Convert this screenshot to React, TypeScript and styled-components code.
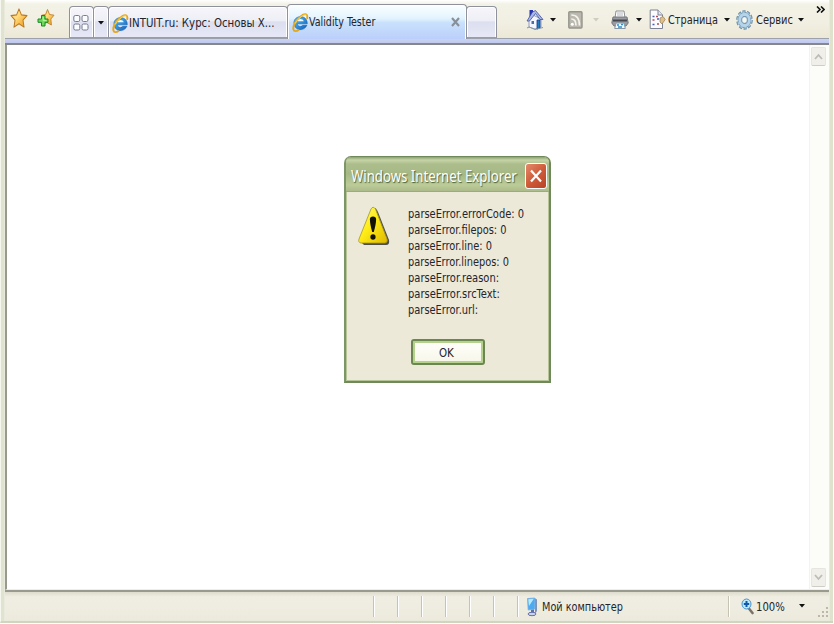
import React from "react";
import styled, { createGlobalStyle, css } from "styled-components";

const Global = createGlobalStyle`
  * { box-sizing: border-box; }
  html, body { margin: 0; padding: 0; background: #fff; overflow: hidden; }
  svg { display: block; flex: none; }
`;

const Window = styled.div`
  width: 834px;
  height: 624px;
  display: flex;
  flex-direction: column;
  position: relative;
  overflow: hidden;
  color: #24242c;
  font: 13px/16px "DejaVu Sans Condensed", "DejaVu Sans", sans-serif;
  background: #fff;
`;

const Frame = styled.div`
  width: 833px;
  height: 623px;
  display: flex;
  flex-direction: column;
  padding: 0 4px 1px 4px;
  background: #e8eadb;
  border-left: 1px solid #f6f7ee;
  border-bottom: 2px solid #d0d5bf;
  box-shadow: inset 3px 0 #dfe3cf, inset -3px 0 #dfe2cd;
`;

const Text = styled.span<{ $w: number; $s: number }>`
  display: inline-block;
  flex: none;
  width: ${(p) => p.$w}px;
  white-space: pre;
  transform: scaleX(${(p) => p.$s});
  transform-origin: 0 50%;
`;

const Toolbar = styled.header`
  height: 38px;
  flex: none;
  display: flex;
  align-items: flex-start;
  background: linear-gradient(#fff 0, #f3f2e6 4px, #f1efe2 24px, #ebe8d6 38px);
`;

const Favorites = styled.div`
  width: 64px;
  display: flex;
  gap: 9px;
  padding: 8px 0 0 5px;
`;

const tabFace = css`
  border: 1px solid #8f929c;
  border-bottom-color: #9a9da8;
  background: linear-gradient(#f6f6fa 0, #eeeef6 45%, #dcdff0 50%, #e6e8f6 100%);
  box-shadow: inset 1px 1px #fff, inset -1px 0 #fff;
`;

const Tab = styled.div<{ $w: number; $pad?: number }>`
  ${tabFace}
  width: ${(p) => p.$w}px;
  height: 32px;
  margin-top: 6px;
  margin-right: -1px;
  padding: 2px 0 0 ${(p) => p.$pad ?? 0}px;
  border-radius: 4px 4px 0 0;
  display: flex;
  align-items: center;
  flex: none;
`;

const ActiveTab = styled(Tab)`
  height: 35px;
  margin-top: 4px;
  margin-bottom: -1px;
  border-bottom: 0;
  padding-top: 0;
  position: relative;
  background: linear-gradient(#fbffff 0, #e2f3fe 40%, #c9e1fc 52%, #bccffb 100%);
`;

const TabClose = styled.span`
  margin-left: auto;
  padding-right: 6px;
`;

const Commands = styled.nav`
  display: flex;
  flex: 1;
  height: 38px;
  padding: 1px 0 0 30px;
  align-items: center;
`;

const Slot = styled.span<{ $w: number }>`
  width: ${(p) => p.$w}px;
  flex: none;
  display: flex;
  align-items: center;
`;

const More = styled.span`
  align-self: flex-start;
  padding-top: 5px;
`;

const TabStrip = styled.div`
  height: 7px;
  flex: none;
  border-top: 1px solid #9da1ac;
  border-bottom: 2px solid #85878a;
  background: linear-gradient(#cbd3f2, #bfc9ee);
`;

const Viewport = styled.main`
  flex: 1;
  display: flex;
  justify-content: flex-end;
  background: #fff;
  border-left: 2px solid #98998f;
  border-bottom: 1px solid #eee;
`;

const ScrollTrack = styled.div`
  width: 20px;
  padding: 2px 1px;
  display: flex;
  flex-direction: column;
  justify-content: space-between;
  background: #fcfcf9;
  border-left: 1px solid #f4f4ee;
`;

const ScrollButton = styled.div`
  width: 15px;
  height: 19px;
  display: grid;
  place-items: center;
  background: #f0efea;
  border: 1px solid #e6e5df;
  border-bottom-color: #cfcec6;
  border-radius: 2px;
`;

const StatusBar = styled.footer`
  height: 30px;
  flex: none;
  display: flex;
  border-top: 2px solid #9a9a8e;
  background: linear-gradient(#dedccd 0, #f0eee3 5px, #edeadd 100%);
`;

const StatusText = styled.div`
  width: 368px;
  flex: none;
`;

const Pane = styled.div<{ $w: number }>`
  width: ${(p) => p.$w}px;
  height: 21px;
  margin-top: 4px;
  flex: none;
  border-left: 1px solid #c6c3b3;
  box-shadow: inset 1px 0 #fff;
  display: flex;
  align-items: center;
`;

const ZonePane = styled(Pane)`
  padding-left: 8px;
`;

const ZoomArrow = styled.span`
  align-self: center;
`;

const Grip = styled.span`
  margin-left: auto;
  align-self: flex-end;
`;

const Dialog = styled.section`
  position: absolute;
  left: 344px;
  top: 156px;
  width: 207px;
  height: 227px;
  display: flex;
  flex-direction: column;
  border: 2px solid #70895a;
  border-top-width: 1px;
  border-left-color: #7d9668;
  border-radius: 7px 7px 0 0;
  background: #ece9d8;
  box-shadow: inset 1px 0 #b6c597, inset -1px -1px #b6c597;
`;

const TitleBar = styled.div`
  height: 35px;
  flex: none;
  display: flex;
  align-items: center;
  padding: 3px 2px 0 5px;
  border-radius: 5px 5px 0 0;
  border-bottom: 1px solid #9aab80;
  background: linear-gradient(#8ca173 0, #c6d4a6 3px, #adbe8d 7px, #a5b984 17px, #bccb98 28px, #abbb89 34px);
`;

const Title = styled(Text)`
  color: #fff;
  text-shadow: 1px 1px 1px #4f6138;
  font: 16px/20px "Noto Sans", sans-serif;
`;

const CloseButton = styled.button`
  width: 22px;
  height: 26px;
  margin-left: auto;
  padding: 0;
  display: grid;
  place-items: center;
  border: 1px solid #fff;
  border-radius: 3px;
  background: linear-gradient(135deg, #e38b6c, #cf5b3a 50%, #b94325);
`;

const DialogBody = styled.div`
  height: 147px;
  display: flex;
  padding: 14px 0 0 12px;
`;

const Messages = styled.div`
  display: flex;
  flex-direction: column;
  padding-left: 18px;
`;

const OkButton = styled.button`
  width: 74px;
  height: 26px;
  margin-left: 65px;
  padding: 1px 0 0 26px;
  display: flex;
  align-items: center;
  color: inherit;
  font: inherit;
  border: 2px solid #6b8650;
  border-radius: 3px;
  background: linear-gradient(#fffffb, #f7f6e9);
  box-shadow: inset 0 0 0 2px #b5d18d;
`;

const Arrow = ({ color = "#111" }: { color?: string }) => (
  <svg width="6" height="4" viewBox="0 0 6 4"><path d="M0 0H6L3 3.6Z" fill={color} /></svg>
);

const starPath = "M9 .8 11.4 6.2 17 6.9 13 11 14 17.2 9 14.1 4 17.2 5 11 1 6.9 6.6 6.2Z";

const HiddenDefs = styled.svg`
  position: absolute;
  width: 0;
  height: 0;
`;

const Defs = () => (
  <HiddenDefs>
    <defs>
      <linearGradient id="gold" x1="0" y1="0" x2="1" y2="1">
        <stop offset="0" stopColor="#ffc65a" /><stop offset=".4" stopColor="#ffdc80" /><stop offset="1" stopColor="#f1930a" />
      </linearGradient>
      <linearGradient id="blue" x1="0" y1="0" x2="1" y2="1">
        <stop offset="0" stopColor="#58c5fa" /><stop offset="1" stopColor="#105cb6" />
      </linearGradient>
      <linearGradient id="warning" x1="0" y1="0" x2="1" y2="1">
        <stop offset="0" stopColor="#fff97a" /><stop offset=".45" stopColor="#ffed16" /><stop offset="1" stopColor="#e0b800" />
      </linearGradient>
    </defs>
  </HiddenDefs>
);

const Star = () => (
  <svg width="18" height="20" viewBox="0 0 18 18" preserveAspectRatio="none">
    <path d={starPath} fill="url(#gold)" stroke="#b87824" strokeWidth="1" strokeLinejoin="round" />
  </svg>
);

const AddStar = () => (
  <svg width="18" height="20" viewBox="0 0 18 20">
    <path d="M10.5 1.5 12.5 6.5 17 7.2 13.8 11 14.4 17 10 14.5 6 16 6.4 10 4.8 7.2 8.6 6.5Z" fill="url(#gold)" stroke="#c58a35" strokeLinejoin="round" />
    <path d="M4.5 7.5H8V11H11V14.3H8V18H4.5V14.3H1V11H4.5Z" fill="#6ed95a" stroke="#168a22" strokeLinejoin="round" />
    <path d="M6.2 9V12.6H9.5" fill="none" stroke="#c0f5a8" />
  </svg>
);

const IELogo = () => (
  <svg width="17" height="21" viewBox="0 0 16 21" preserveAspectRatio="none">
    <path d="M14.4 11.8H5C5.2 14.6 8.7 15.4 10 13.3H14.1C11 20.2 1.8 18.6 1.8 10.8 1.8 2.8 14.6 2 14.4 11.8Z" fill="url(#blue)" stroke="#0e5caf" strokeWidth=".5" />
    <path d="M5.1 9.2H11C10.4 6.2 5.6 6.1 5.1 9.2Z" fill="#effaff" />
    <path d="M14.2 7C15.3 1.8 12.5.5 8.3 4.2 3.5 8.2.7 14 1.3 17.3 1.8 20 4.3 19.5 6.5 17.8" fill="none" stroke="#e5a719" strokeWidth="1.8" />
    <path d="M13.5 3.1C11.5 1.7 6 5.8 3 11.5" fill="none" stroke="#ffe16b" strokeWidth=".8" />
  </svg>
);

const QuickTabs = () => (
  <svg width="16" height="18" viewBox="0 0 16 18" fill="#fbfcff" stroke="#777b8a">
    <rect x=".8" y="1.5" width="6" height="6" rx="1.5" /><rect x="9" y="1.5" width="6" height="6" rx="1.5" />
    <rect x=".8" y="10" width="6" height="6" rx="1.5" /><rect x="9" y="10" width="6" height="6" rx="1.5" />
  </svg>
);

const Home = () => (
  <svg width="18" height="22" viewBox="0 0 18 22">
    <path d="M3.5 1H7V8H3.5Z" fill="#2433b0" />
    <path d="M3 10 7 6 15 10V18L9 20 3 18Z" fill="#f4f6ff" stroke="#7b86ae" strokeWidth=".8" />
    <path d="M1 12 6.5 3 9.5 1.5 17 10.5 14 10.5 9.5 4.5 3.5 12Z" fill="#a9b8e8" stroke="#42519c" strokeWidth=".8" />
    <path d="M11 11H14V19L11 20Z" fill="#247cc0" stroke="#123b87" strokeWidth=".8" />
    <path d="M5.5 12H8V15H5.5Z" fill="#516aa7" />
    <path d="M1 19 3.2 18 9 20.5 17 18.5" stroke="#8199a5" fill="none" />
  </svg>
);

const Feed = () => (
  <svg width="15" height="18" viewBox="0 0 15 18">
    <rect x=".8" y=".8" width="13.2" height="16.2" rx="1" fill="#bab8af" stroke="#96958c" strokeWidth="1.4" />
    <path d="M3.3 4C8.5 4 11.5 8 11.5 14.5M3.3 8C6.5 8 8 10.7 8 14.5" fill="none" stroke="#f4f3eb" strokeWidth="1.7" />
    <circle cx="4.3" cy="13.2" r="1.5" fill="#fff" />
  </svg>
);

const Printer = () => (
  <svg width="18" height="20" viewBox="0 0 18 20">
    <path d="M5 1H13L14 8H4Z" fill="#fff" stroke="#8c8f94" />
    <path d="M6 3H12M6 5H12" stroke="#b3b6bd" />
    <path d="M2 7H16L17.2 13 15 16H3L.8 13Z" fill="#9a9ca1" stroke="#73777d" />
    <path d="M2 10.5H16" stroke="#44484e" strokeWidth="2" />
    <path d="M5 13H13L14.3 18.5H3.7Z" fill="#edf8ff" stroke="#8798a5" />
    <path d="M6 15H8M10 14.5H12M7 17H11" stroke="#318fce" strokeWidth="1.4" />
  </svg>
);

const Page = () => (
  <svg width="17" height="21" viewBox="0 0 17 21">
    <path d="M1.2 1H9L13.5 6V19.5H1.2Z" fill="#fcfcff" stroke="#7c8292" />
    <path d="M9 1V6H13.5" fill="#dfe5f1" stroke="#7c8292" />
    <path d="M3.5 7.5H5.5M8 10H10M3.5 15.5H5.5" stroke="#465cba" strokeWidth="1.5" />
    <path d="M7 7.5H9M3.5 11H5.5M8 15H10" stroke="#b24c54" strokeWidth="1.3" />
    <path d="M11 9 14 7.5 16.2 10.5 13 15 11 13Z" fill="#dfbf8a" stroke="#9e875b" strokeWidth=".8" />
  </svg>
);

const Gear = () => (
  <svg width="17" height="20" viewBox="0 0 20 20" preserveAspectRatio="none">
    <circle cx="10" cy="10" r="8.2" fill="none" stroke="#6a8eaa" strokeWidth="3.2" strokeDasharray="3.5 1.652" />
    <circle cx="10" cy="10" r="5.5" fill="none" stroke="#6a8eaa" strokeWidth="5" />
    <circle cx="10" cy="10" r="8" fill="none" stroke="#abc9dd" strokeWidth="1.4" strokeDasharray="2.5 2.527" />
    <circle cx="10" cy="10" r="5.6" fill="none" stroke="#b4d4ea" strokeWidth="3.3" />
    <circle cx="10" cy="10" r="3.3" fill="#f4f6f2" stroke="#6a8eaa" strokeWidth=".7" />
  </svg>
);

const Warning = () => (
  <svg width="32" height="40" viewBox="0 0 32 40">
    <path d="M17 2Q18 2 20 6L31 34Q32 39 28 39H6L3 36Z" fill="#4e4d4b" />
    <path d="M13 3Q15-.5 17.5 3L29 33Q30 37 26.5 37H3Q-.2 36.5 1 33Z" fill="url(#warning)" stroke="#a79820" strokeWidth=".8" />
    <path d="M11.9 13Q12 10.5 15 10.5 18 10.5 18.1 13 18.1 18 15.8 26H14.2Q11.9 18 11.9 13Z" fill="#121306" />
    <ellipse cx="15" cy="31" rx="2.6" ry="2.7" fill="#121306" />
  </svg>
);

const Computer = () => (
  <svg width="13" height="20" viewBox="0 0 13 20">
    <path d="M8.5 1 11 2.5V14L9 17V12Z" fill="#7d92ba" />
    <path d="M1.5 1.5 8.8 1V12L2.2 13Z" fill="#4fa9ee" stroke="#6fb0e4" strokeWidth=".8" />
    <path d="M2.2 2.2 7.8 1.8 3 9Z" fill="#b9e8ff" />
    <path d="M5 13 8 12.5V16H5Z" fill="#5f6fa8" /><ellipse cx="6" cy="17" rx="4" ry="1.7" fill="#ccd2e8" stroke="#6672b0" />
  </svg>
);

const Magnifier = () => (
  <svg width="13" height="17" viewBox="0 0 13 17">
    <path d="M7.5 10 11.5 15" stroke="#7c7169" strokeWidth="2.6" strokeLinecap="round" />
    <ellipse cx="5.5" cy="6" rx="4.5" ry="5" fill="#bde9ff" stroke="#4c93ca" />
    <path d="M5.5 3V9M2.8 6H8.2" stroke="#1159a8" strokeWidth="2" />
  </svg>
);

const Chevron = ({ down = false }: { down?: boolean }) => (
  <svg width="9" height="7" viewBox="0 0 9 7"><path d={down ? "M1 1 4.5 5 8 1" : "M1 6 4.5 2 8 6"} fill="none" stroke="#bdbcb5" strokeWidth="1.8" /></svg>
);

const messages: [string, number, number][] = [
  ["parseError.errorCode: 0", 118, 0.848],
  ["parseError.filepos: 0", 100, 0.84],
  ["parseError.line: 0", 86, 0.84],
  ["parseError.linepos: 0", 102, 0.838],
  ["parseError.reason:", 94, 0.85],
  ["parseError.srcText:", 97, 0.85],
  ["parseError.url:", 73, 0.845],
];

export default function App() {
  return (
    <>
      <Global />
      <Window>
        <Defs />
        <Frame>
          <Toolbar>
            <Favorites><Star /><AddStar /></Favorites>
            <Tab $w={25} $pad={3}><QuickTabs /></Tab>
            <Tab $w={16} $pad={4}><Arrow /></Tab>
            <Tab $w={180} $pad={3}><IELogo /><Text $w={147} $s={0.873}>INTUIT.ru: Курс: Основы X...</Text></Tab>
            <ActiveTab $w={180} $pad={4}>
              <IELogo /><Text $w={69} $s={0.815}>Validity Tester</Text>
              <TabClose><svg width="9" height="10" viewBox="0 0 9 10"><path d="M1 1 8 9M8 1 1 9" stroke="#888f99" strokeWidth="2.1" /></svg></TabClose>
            </ActiveTab>
            <Tab $w={31} />
            <Commands>
              <Slot $w={24}><Home /></Slot><Slot $w={18}><Arrow /></Slot>
              <Slot $w={25}><Feed /></Slot><Slot $w={18}><Arrow color="#d0cdc0" /></Slot>
              <Slot $w={25}><Printer /></Slot><Slot $w={13}><Arrow /></Slot>
              <Slot $w={19}><Page /></Slot><Slot $w={56}><Text $w={51} $s={0.833}>Страница</Text></Slot><Slot $w={12}><Arrow /></Slot>
              <Slot $w={20}><Gear /></Slot><Slot $w={42}><Text $w={38} $s={0.846}>Сервис</Text></Slot><Slot $w={18}><Arrow /></Slot>
              <More><svg width="9" height="7" viewBox="0 0 9 7"><path d="M1 .5 4 3.5 1 6.5M5 .5 8 3.5 5 6.5" fill="none" stroke="#111" strokeWidth="1.6" /></svg></More>
            </Commands>
          </Toolbar>
          <TabStrip />
          <Viewport>
            <ScrollTrack>
              <ScrollButton><Chevron /></ScrollButton>
              <ScrollButton><Chevron down /></ScrollButton>
            </ScrollTrack>
          </Viewport>
          <StatusBar>
            <StatusText />
            {[0, 1, 2, 3, 4, 5].map((i) => <Pane key={i} $w={24} />)}
            <ZonePane $w={211}><Slot $w={16}><Computer /></Slot><Text $w={82} $s={0.83}>Мой компьютер</Text></ZonePane>
            <Pane $w={71}><Slot $w={12} /><Slot $w={15}><Magnifier /></Slot><Text $w={35} $s={0.86}>100%</Text></Pane>
            <ZoomArrow><Arrow /></ZoomArrow>
            <Grip><svg width="12" height="14" viewBox="0 0 12 14" fill="#bbb8a8"><path d="M9 1h2v2H9zM5 5h2v2H5zM9 5h2v2H9zM1 9h2v2H1zM5 9h2v2H5zM9 9h2v2H9z" /></svg></Grip>
          </StatusBar>
        </Frame>
        <Dialog>
          <TitleBar>
            <Title $w={169} $s={0.825}>Windows Internet Explorer</Title>
            <CloseButton aria-label="Закрыть"><svg width="14" height="16" viewBox="0 0 14 16"><path d="M2 2.5 12 13.5M12 2.5 2 13.5" stroke="#fff" strokeWidth="2.2" /></svg></CloseButton>
          </TitleBar>
          <DialogBody>
            <Warning />
            <Messages>{messages.map(([line, width, scale]) => <Text key={line} $w={width} $s={scale}>{line}</Text>)}</Messages>
          </DialogBody>
          <OkButton><Text $w={15} $s={0.88}>OK</Text></OkButton>
        </Dialog>
      </Window>
    </>
  );
}
